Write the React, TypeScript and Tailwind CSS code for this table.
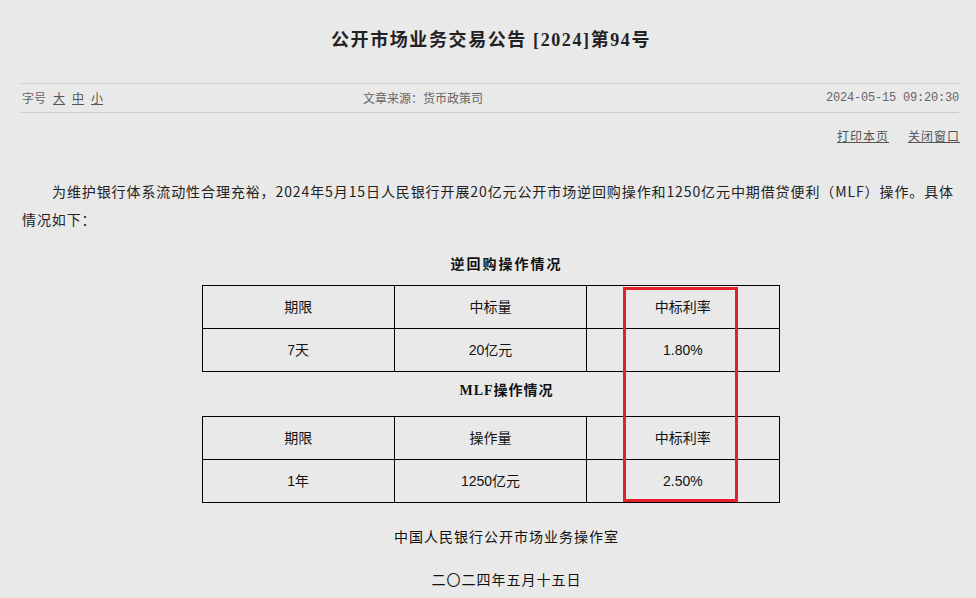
import React from 'react';

const cjk = { fontFamily: '"Noto Sans CJK SC", sans-serif' };
const tableFont = { fontFamily: '"Liberation Sans", "Noto Sans CJK SC", sans-serif' };
const titleFont = { fontFamily: '"Liberation Serif", "Noto Sans CJK SC", serif' };
const monoFont = { fontFamily: '"Liberation Mono", "Noto Sans CJK SC", monospace' };

function RateTable({ head, row }: { head: string[]; row: string[] }) {
    return (
        <table className="mx-auto w-[578px] table-fixed border-collapse text-[14px] text-[#111]" style={tableFont}>
            <tbody>
                <tr className="h-[43px]">
                    {head.map((h) => (
                        <td key={h} className="border border-black text-center align-middle">{h}</td>
                    ))}
                </tr>
                <tr className="h-[43px]">
                    {row.map((c) => (
                        <td key={c} className="border border-black text-center align-middle">{c}</td>
                    ))}
                </tr>
            </tbody>
        </table>
    );
}

export default function App() {
    return (
        <div className="relative h-[598px] w-[976px] overflow-hidden bg-[#e9e9e9]" style={cjk}>
            {/* Title */}
            <div className="flex h-[83px] justify-center pl-[6px] pt-[28px]">
                <h1 className="text-[18px] font-bold leading-[24px] tracking-[1.6px] text-[#222]" style={titleFont}>
                    公开市场业务交易公告 [2024]第94号
                </h1>
            </div>

            {/* Meta row */}
            <div className="ml-[21px] flex h-[30px] w-[938px] items-center border-y border-[#cccccc] text-[12px] text-[#666]">
                <div className="flex w-[342px] items-center gap-[7px] pl-px">
                    <span>字号</span>
                    <a className="text-[#555] underline">大</a>
                    <a className="text-[#555] underline">中</a>
                    <a className="text-[#555] underline">小</a>
                </div>
                <div className="flex-1">文章来源：货币政策司</div>
                <div className="tracking-[-0.2px]" style={monoFont}>2024-05-15 09:20:30</div>
            </div>

            {/* Links */}
            <div className="mt-[13px] flex w-[960px] justify-end gap-[19px] text-[12px] leading-[20px] tracking-[1px] text-[#555]">
                <a className="underline">打印本页</a>
                <a className="underline">关闭窗口</a>
            </div>

            {/* Content */}
            <div className="ml-[22px] mt-[31px] w-[937px] text-[14px] text-[#222]">
                <p className="indent-[30px] leading-[28px] tracking-[0.9px]">
                    为维护银行体系流动性合理充裕，2024年5月15日人民银行开展20亿元公开市场逆回购操作和1250亿元中期借贷便利（MLF）操作。具体
                    <br />
                    情况如下：
                </p>

                <p className="mt-[16px] pl-[32px] text-center text-[14px] font-bold leading-[28px] tracking-[2px] text-[#111]">
                    逆回购操作情况
                </p>
                <div className="mt-[8px]">
                    <RateTable head={['期限', '中标量', '中标利率']} row={['7天', '20亿元', '1.80%']} />
                </div>

                <p className="mb-[11px] mt-[3px] pl-[32px] text-center text-[14px] font-bold leading-[28px] tracking-[1px] text-[#111]">
                    <span style={titleFont}>MLF</span>操作情况
                </p>
                <RateTable head={['期限', '操作量', '中标利率']} row={['1年', '1250亿元', '2.50%']} />

                <p className="mt-[19px] pl-[32px] text-center leading-[28px] tracking-[1px] text-[#111]">
                    中国人民银行公开市场业务操作室
                </p>
                <p className="mt-[15px] pl-[32px] text-center leading-[28px] tracking-[1px] text-[#111]">
                    二〇二四年五月十五日
                </p>
            </div>

            {/* Highlight annotation */}
            <div className="absolute left-[623px] top-[287px] h-[215px] w-[115px] border-[3px] border-[#e4202a]" />
        </div>
    );
}
